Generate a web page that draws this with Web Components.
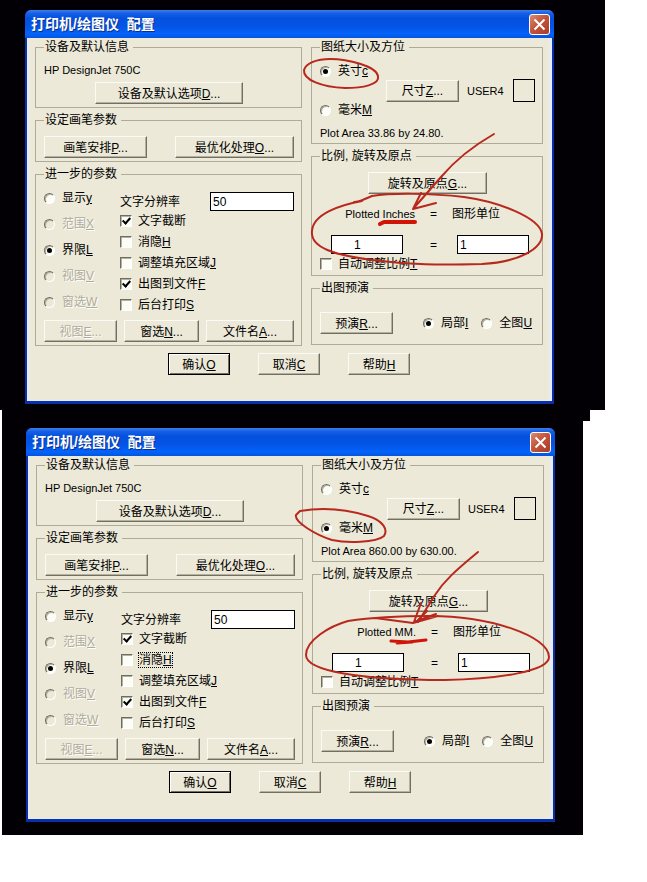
<!DOCTYPE html>
<html lang="zh-CN">
<head>
<meta charset="utf-8">
<title>打印机/绘图仪 配置</title>
<style>
  body {
    margin: 0;
    background: #fff;
    color: #000;
    font: 12px/14px "Liberation Sans", "Noto Sans CJK SC", sans-serif;
  }

  .stage {
    position: relative;
    background: #020004;
  }

  .stage.inches {
    margin-right: 42px;
    padding: 10px 51px 6px 25px;
  }

  .stage.metric {
    margin: 0 64px 0 2px;
    padding: 18px 28px 13px 24px;
  }

  /* leftover corner of the upper capture */
  .stage.metric::before {
    content: "";
    position: absolute;
    top: 0;
    right: -7px;
    width: 7px;
    height: 11px;
    background: #020004;
  }
</style>
</head>
<body>
  <div class="stage inches">
    <plot-config unit="Inches" area="33.86 by 24.80"></plot-config>
  </div>
  <div class="stage metric">
    <plot-config unit="MM" area="860.00 by 630.00"></plot-config>
  </div>

<script>
const attach = (host, html) => {
  const template = document.createElement('template');
  template.innerHTML = html;
  const root = host.attachShadow({ mode: 'open' });
  root.appendChild(template.content.cloneNode(true));
  return root;
};

// Dialog frame: title bar, body, close button
class XpDialog extends HTMLElement {
  connectedCallback() {
    if (this.shadowRoot) return;
    attach(this, `
      <style>
        :host {
          display: block;
          position: relative;
          border: solid #0b2fa8;
          border-width: 0 2px 3px;
          border-radius: 6px 6px 0 0;
          background: #0855e0;
        }

        header {
          display: flex;
          align-items: center;
          justify-content: space-between;
          height: 28px;
          margin: 0 -2px;
          padding: 0 4px 0 6px;
          box-sizing: border-box;
          border-radius: 6px 6px 0 0;
          background: linear-gradient(#3a80ea, #1560e6 12%, #0450dc 30%, #0455e6 60%, #0363fb 85%, #0455dc);
        }

        h1 {
          margin: 0;
          color: #fff;
          font-size: 14px;
          line-height: 20px;
          white-space: pre;
          text-shadow: 1px 1px #0a2f90;
        }

        button {
          display: flex;
          align-items: center;
          justify-content: center;
          width: 21px;
          height: 21px;
          padding: 0;
          border: 1px solid #fff;
          border-radius: 3px;
          background: linear-gradient(135deg, #d98a78, #c4553c 45%, #a83c28);
        }

        .body {
          border: solid #e6ecf6;
          border-width: 0 3px 1px 2px;
          padding: 2px 6px 25px;
          background: #ece9d8;
        }
      </style>
      <header>
        <h1>${this.getAttribute('heading')}</h1>
        <button type="button" aria-label="关闭">
          <svg width="13" height="13" viewBox="0 0 13 13" stroke="#fff" stroke-width="2">
            <path d="M1.5 1.5 L11.5 11.5 M11.5 1.5 L1.5 11.5"/>
          </svg>
        </button>
      </header>
      <div class="body"><slot></slot></div>
      <slot name="overlay"></slot>
    `);
  }
}

// Etched frame with a caption
class GroupBox extends HTMLElement {
  connectedCallback() {
    if (this.shadowRoot) return;
    attach(this, `
      <style>
        :host { display: block; }

        fieldset {
          min-width: 0;
          margin: 0;
          padding: 9px 7px 3px 8px;
          border: 1px solid #aeab98;
        }

        legend {
          padding: 0 4px 0 1px;
        }
      </style>
      <fieldset>
        <legend>${this.getAttribute('caption')}</legend>
        <slot></slot>
      </fieldset>
    `);
  }
}

class PushButton extends HTMLElement {
  connectedCallback() {
    if (this.shadowRoot) return;
    const disabled = this.hasAttribute('disabled') ? 'disabled' : '';
    attach(this, `
      <style>
        :host { display: block; width: var(--width, 62px); }

        button {
          display: block;
          width: 100%;
          height: 22px;
          padding: 1px 0 0;
          border: 1px solid;
          border-color: #fbfaf4 #716f64 #716f64 #fbfaf4;
          background: #ece9d8;
          box-shadow: inset -1px -1px #b5b19e;
          color: inherit;
          font: inherit;
          white-space: nowrap;
        }

        :host([default]) button {
          border-color: #000;
          box-shadow: inset 1px 1px #fff, inset -1px -1px #716f64;
        }

        button:disabled {
          color: #b0ac9a;
          text-shadow: 1px 1px #fff;
        }
      </style>
      <button type="button" ${disabled}><slot></slot></button>
    `);
  }
}

// Radio button or tick box with its label, chosen by the type attribute
class ToggleOption extends HTMLElement {
  connectedCallback() {
    if (this.shadowRoot) return;
    const type = this.getAttribute('type') || 'checkbox';
    const flags = ['checked', 'disabled'].filter(f => this.hasAttribute(f)).join(' ');
    const root = attach(this, `
      <style>
        :host { display: block; }

        label {
          display: flex;
          align-items: center;
          gap: 6px;
          height: 16px;
          white-space: nowrap;
        }

        input {
          appearance: none;
          flex: none;
          display: grid;
          place-items: center;
          box-sizing: border-box;
          width: 12px;
          height: 12px;
          margin: 0;
          border: 1px solid;
          border-color: #6f6c62 #fff #fff #6f6c62;
          background: #fdfdf8;
          box-shadow: inset 1px 1px #b5b19e;
        }

        input[type=radio] {
          width: 11px;
          height: 11px;
          margin-right: 1px;
          border-radius: 50%;
        }

        input[type=radio]:checked::before {
          content: "";
          width: 5px;
          height: 5px;
          border-radius: 50%;
          background: #000;
        }

        input[type=checkbox]:checked::before {
          content: "";
          width: 3px;
          height: 6px;
          border: solid #000;
          border-width: 0 2px 2px 0;
          transform: translateY(-1px) rotate(42deg);
        }

        input:disabled { background: #ece9d8; }

        input:disabled + span {
          color: #b0ac9a;
          text-shadow: 1px 1px #fff;
        }

        :host([focused]) span { outline: 1px dotted #000; }
      </style>
      <label><input type="${type}" ${flags}><span><slot></slot></span></label>
    `);

    // Each radio sits in its own root, so the group is cleared by hand
    root.querySelector('input').addEventListener('change', () => {
      if (type !== 'radio') return;
      this.parentElement.querySelectorAll('toggle-option').forEach(other => {
        if (other !== this) other.shadowRoot.querySelector('input').checked = false;
      });
    });
  }
}

// Freehand red pen over the dialog
class PenMarks extends HTMLElement {
  connectedCallback() {
    if (this.shadowRoot) return;
    const marks = {
      Inches: `
        <path d="M304 70 C306 63 317 59 330 59 C348 59 376 66 378 76 C380 85 362 88 345 88 C322 87 303 80 304 70"/>
        <path d="M494 134 C466 150 452 164 441 177 L413 209 M421 193 L413 209 L436 203"/>
        <path d="M362 201 C340 205 313 214 312 231 C310 248 335 255 372 260 C410 265 440 265 482 264 C520 262 543 248 542 234 C540 218 500 202 464 197 C430 193 390 193 372 196 C364 199 360 202 354 202"/>
        <path class="bold" d="M380 224 L384 222 L415 222"/>`,
      MM: `
        <path d="M300 511 C330 506 352 511 368 516 C384 521 388 530 384 536 C376 543 346 543 332 540 C316 535 294 522 296 515 L300 511"/>
        <path d="M478 552 C455 571 444 581 435 595 L418 622 M421 603 L414 622 L436 614 M427 611 L418 620"/>
        <path d="M348 621 C330 626 306 640 306 655 C306 671 360 680 445 680 C500 679 549 671 549 657 C549 636 490 616 430 616 C400 616 375 617 348 621 M375 618 L413 623 L438 616"/>
        <path class="thick" d="M391 641 L408 642 L426 640 M397 643 L412 642"/>`
    };
    const metric = this.getAttribute('unit') === 'MM';
    attach(this, `
      <style>
        :host {
          position: absolute;
          inset: 0;
          pointer-events: none;
        }

        svg {
          display: block;
          width: 100%;
          height: 100%;
          overflow: visible;
        }

        path {
          fill: none;
          stroke: #b8281c;
          stroke-width: 2;
          stroke-linecap: round;
          stroke-linejoin: round;
        }

        .bold { stroke: #d01408; stroke-width: 4; }
        .thick { stroke: #d01408; stroke-width: 3; }
      </style>
      <svg viewBox="${metric ? '28 428 525 391' : '27 10 525 391'}" preserveAspectRatio="none" aria-hidden="true">
        ${marks[metric ? 'MM' : 'Inches']}
      </svg>
    `);
  }
}

class PlotConfig extends HTMLElement {
  connectedCallback() {
    if (this.shadowRoot) return;
    const unit = this.getAttribute('unit');
    const metric = unit === 'MM';
    attach(this, `
      <style>
        :host { display: block; }

        .columns, .column, .row, .stack { display: flex; }
        .column, .stack { flex-direction: column; }
        .columns { gap: 9px; }
        .column { gap: 5px; min-width: 0; }
        .column.wide { flex: 267; }
        .column.narrow { flex: 232; }
        .row { align-items: center; }
        .between { justify-content: space-between; }
        .latin { font-size: 11px; }

        .device push-button { margin: 5px auto 0; }

        .more { display: grid; grid-template-columns: 76px 1fr; }
        .modes { gap: 10px; }
        .switches { gap: 5px; margin-top: 2px; }
        .resolution { margin-top: 2px; }
        .actions { margin-top: 7px; }

        .units { width: 66px; gap: 23px; }
        .size { gap: 8px; }
        .size .units { margin-right: -8px; }
        .swatch {
          width: 20px;
          height: 21px;
          margin-left: auto;
          border: 1px solid #000;
        }
        .area { margin-top: 8px; }

        .rotate { margin: 0 auto; }
        .ratio {
          display: grid;
          grid-template-columns: 84px 1fr 77px;
          row-gap: 14px;
          align-items: center;
          margin: 13px 6px 2px 11px;
        }
        .ratio > span { text-align: center; }
        .ratio .latin { text-align: right; }
        .ratio input { width: 72px; }
        .ratio .numerator { padding-left: 22px; }
        .ratio .denominator { justify-self: end; }

        .preview { padding: 8px 0 7px; }
        .preview .choice { gap: 13px; margin-left: 30px; }

        input {
          width: 84px;
          height: 19px;
          box-sizing: border-box;
          padding: 0 2px;
          border: 1px solid #000;
          border-radius: 0;
          background: #fff;
          color: inherit;
          font: inherit;
        }

        footer {
          display: flex;
          justify-content: center;
          gap: 28px;
          margin-top: 7px;
        }
      </style>

      <xp-dialog heading="打印机/绘图仪  配置">
        <div class="columns">
          <div class="column wide">
            <group-box caption="设备及默认信息">
              <div class="stack device">
                <span class="latin">HP DesignJet 750C</span>
                <push-button style="--width: 148px">设备及默认选项<u>D</u>...</push-button>
              </div>
            </group-box>

            <group-box caption="设定画笔参数">
              <div class="row between">
                <push-button style="--width: 103px">画笔安排<u>P</u>...</push-button>
                <push-button style="--width: 119px">最优化处理<u>O</u>...</push-button>
              </div>
            </group-box>

            <group-box caption="进一步的参数">
              <div class="more">
                <div class="stack modes">
                  <toggle-option type="radio">显示<u>y</u></toggle-option>
                  <toggle-option type="radio" disabled>范围<u>X</u></toggle-option>
                  <toggle-option type="radio" checked>界限<u>L</u></toggle-option>
                  <toggle-option type="radio" disabled>视图<u>V</u></toggle-option>
                  <toggle-option type="radio" disabled>窗选<u>W</u></toggle-option>
                </div>
                <div>
                  <div class="row between resolution">
                    <label for="resolution">文字分辨率</label>
                    <input id="resolution" type="text" value="50">
                  </div>
                  <div class="stack switches">
                    <toggle-option checked>文字截断</toggle-option>
                    <toggle-option ${metric ? 'focused' : ''}>消隐<u>H</u></toggle-option>
                    <toggle-option>调整填充区域<u>J</u></toggle-option>
                    <toggle-option checked>出图到文件<u>F</u></toggle-option>
                    <toggle-option>后台打印<u>S</u></toggle-option>
                  </div>
                </div>
              </div>
              <div class="row between actions">
                <push-button style="--width: 73px" disabled>视图<u>E</u>...</push-button>
                <push-button style="--width: 75px">窗选<u>N</u>...</push-button>
                <push-button style="--width: 88px">文件名<u>A</u>...</push-button>
              </div>
            </group-box>
          </div>

          <div class="column narrow">
            <group-box caption="图纸大小及方位">
              <div class="row size">
                <div class="stack units">
                  <toggle-option type="radio" ${metric ? '' : 'checked'}>英寸<u>c</u></toggle-option>
                  <toggle-option type="radio" ${metric ? 'checked' : ''}>毫米<u>M</u></toggle-option>
                </div>
                <push-button style="--width: 73px">尺寸<u>Z</u>...</push-button>
                <span class="latin">USER4</span>
                <span class="swatch"></span>
              </div>
              <div class="latin area">Plot Area ${this.getAttribute('area')}.</div>
            </group-box>

            <group-box caption="比例, 旋转及原点">
              <push-button class="rotate" style="--width: 119px">旋转及原点<u>G</u>...</push-button>
              <div class="ratio">
                <label class="latin" for="plotted">Plotted ${unit}${metric ? '.' : ''}</label>
                <span>=</span>
                <label for="drawing">图形单位</label>
                <input id="plotted" class="numerator" type="text" value="1">
                <span>=</span>
                <input id="drawing" class="denominator" type="text" value="1">
              </div>
              <toggle-option>自动调整比例<u>T</u></toggle-option>
            </group-box>

            <group-box caption="出图预演">
              <div class="row preview">
                <push-button style="--width: 73px">预演<u>R</u>...</push-button>
                <div class="row choice">
                  <toggle-option type="radio" checked>局部<u>I</u></toggle-option>
                  <toggle-option type="radio">全图<u>U</u></toggle-option>
                </div>
              </div>
            </group-box>
          </div>
        </div>

        <footer>
          <push-button default>确认<u>O</u></push-button>
          <push-button>取消<u>C</u></push-button>
          <push-button>帮助<u>H</u></push-button>
        </footer>

        <pen-marks slot="overlay" unit="${unit}"></pen-marks>
      </xp-dialog>
    `);
  }
}

customElements.define('xp-dialog', XpDialog);
customElements.define('group-box', GroupBox);
customElements.define('push-button', PushButton);
customElements.define('toggle-option', ToggleOption);
customElements.define('pen-marks', PenMarks);
customElements.define('plot-config', PlotConfig);
</script>
</body>
</html>
